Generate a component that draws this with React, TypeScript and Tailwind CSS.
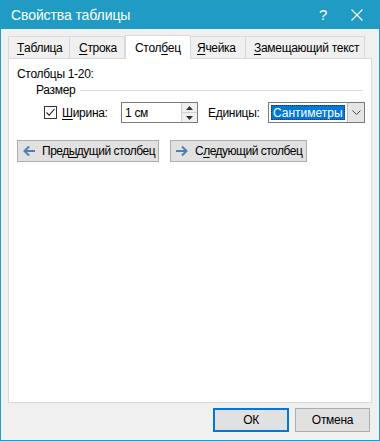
import React from "react";

const U = ({ c }: { c: string }) => <span className="underline underline-offset-[2px] decoration-1">{c}</span>;

const Arrow = ({ dir }: { dir: "l" | "r" }) => (
  <svg width="14" height="12" viewBox="0 0 14 12" className="shrink-0">
    {dir === "l" ? (
      <path d="M13 6H2.5M7 1.5L2.5 6L7 10.5" fill="none" stroke="#4f7db5" strokeWidth="2" />
    ) : (
      <path d="M1 6h10.5M7 1.5L11.5 6L7 10.5" fill="none" stroke="#4f7db5" strokeWidth="2" />
    )}
  </svg>
);

export default function App() {
  const font = { fontFamily: '"Liberation Sans", Arial, sans-serif' };
  return (
    <div className="w-[380px] h-[441px] flex flex-col bg-[#f0f0f0] border border-t-0 border-[#1f9bc4] text-[12px] tracking-[-0.3px] text-black leading-none whitespace-nowrap" style={font}>
      <div className="h-[29px] shrink-0 bg-[#1f9bc4] flex items-center pl-[10px] text-white text-[14px] tracking-[-0.1px]">
        <span className="flex-1">Свойства таблицы</span>
        <span className="w-[20px] text-center text-[15px] mr-[18px]">?</span>
        <svg width="12" height="12" viewBox="0 0 12 12" className="mr-[16px]">
          <path d="M0.5 0.5L11.5 11.5M11.5 0.5L0.5 11.5" stroke="white" strokeWidth="1.1" />
        </svg>
      </div>
      <div className="flex items-end pl-[7px] pt-[6px] h-[29px] shrink-0">
        <div className="h-[22px] pl-[8px] flex items-center border border-b-0 border-r-0 border-[#d9d9d9] w-[61px]"><U c="Т" />аблица</div>
        <div className="h-[22px] pl-[9px] flex items-center border border-b-0 border-[#d9d9d9] w-[56px]"><U c="С" />трока</div>
        <div className="h-[24px] pl-[9px] flex items-center border border-b-0 border-[#d9d9d9] bg-white w-[66px] -mb-px relative z-10">Стол<U c="б" />ец</div>
        <div className="h-[22px] pl-[6px] flex items-center border border-b-0 border-l-0 border-[#d9d9d9] w-[55px]"><U c="Я" />чейка</div>
        <div className="h-[22px] pl-[8px] flex items-center border border-b-0 border-l-0 border-[#d9d9d9] w-[119px]"><U c="З" />амещающий текст</div>
      </div>
      <div className="mx-[7px] h-[345px] bg-white border border-[#d9d9d9] flex flex-col">
        <div className="pl-[8px] pt-[9px]">Столбцы 1-20:</div>
        <div className="flex items-center pl-[27px] pt-[4px] pr-[8px]">
          <span>Размер</span>
          <div className="flex-1 h-px bg-[#dcdcdc] ml-[5px]" />
        </div>
        <div className="flex items-center pt-[6px] pl-[35px]">
          <div className="w-[13px] h-[13px] border border-[#333] flex items-center justify-center shrink-0">
            <svg width="11" height="11" viewBox="0 0 11 11"><path d="M1.5 5.5L4.2 8.2L9.5 2" fill="none" stroke="#222" strokeWidth="1.1" /></svg>
          </div>
          <span className="ml-[5px] w-[59px]"><U c="Ш" />ирина:</span>
          <div className="w-[77px] h-[21px] border border-[#7a7a7a] flex shrink-0">
            <div className="flex-1 flex items-center pl-[3px]">1 см</div>
            <div className="w-[16px] flex flex-col border-l border-[#d0d0d0]">
              <div className="flex-1 flex items-center justify-center bg-[#f0f0f0] border-b border-[#d0d0d0]">
                <svg width="7" height="4" viewBox="0 0 7 4"><path d="M0 4L3.5 0L7 4Z" fill="#333" /></svg>
              </div>
              <div className="flex-1 flex items-center justify-center bg-[#f0f0f0]">
                <svg width="7" height="4" viewBox="0 0 7 4"><path d="M0 0L3.5 4L7 0Z" fill="#333" /></svg>
              </div>
            </div>
          </div>
          <span className="ml-[10px] w-[60px]">Е<U c="д" />иницы:</span>
          <div className="w-[97px] h-[21px] border border-[#7a7a7a] flex bg-white shrink-0">
            <div className="flex-1 flex items-center p-[2px]">
              <div className="h-full w-full bg-[#0078d7] text-white flex items-center pl-[2px] outline outline-1 outline-dotted outline-[#333] -outline-offset-1 tracking-normal">Сантиметры</div>
            </div>
            <div className="w-[17px] flex items-center justify-center bg-[#e5e5e5] border-l border-[#bdbdbd]">
              <svg width="9" height="6" viewBox="0 0 9 6"><path d="M0.5 0.5L4.5 4.5L8.5 0.5" fill="none" stroke="#444" strokeWidth="1" /></svg>
            </div>
          </div>
        </div>
        <div className="flex gap-[11px] pl-[8px] pt-[17px] tracking-[-0.5px]">
          <div className="h-[22px] w-[142px] bg-[#e1e1e1] border border-[#adadad] flex items-center pl-[4px] gap-[6px]">
            <Arrow dir="l" />
            <span>Пред<U c="ы" />дущий столбец</span>
          </div>
          <div className="h-[22px] w-[137px] bg-[#e1e1e1] border border-[#adadad] flex items-center pl-[4px] gap-[6px]">
            <Arrow dir="r" />
            <span>С<U c="л" />едующий столбец</span>
          </div>
        </div>
      </div>
      <div className="flex justify-end gap-[6px] pr-[9px] pt-[5px]">
        <div className="w-[76px] h-[24px] bg-[#e1e1e1] border-2 border-[#0078d7] flex items-center justify-center">ОК</div>
        <div className="w-[75px] h-[24px] bg-[#e1e1e1] border border-[#adadad] flex items-center justify-center">Отмена</div>
      </div>
    </div>
  );
}
